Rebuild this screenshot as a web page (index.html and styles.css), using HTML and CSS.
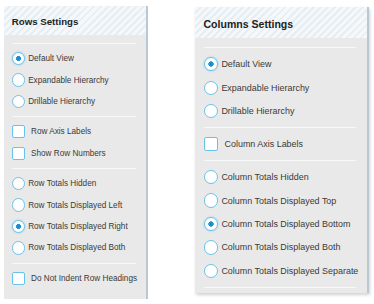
FILE: index.html
```html
<!DOCTYPE html>
<html lang="en">
<head>
    <meta charset="UTF-8">
    <title>Pivot Settings</title>
    <link rel="stylesheet" href="styles.css">
</head>
<body>
    <div class="panels">
        <!-- Rows -->
        <section class="panel panel-rows">
            <header class="panel-head"><h2>Rows Settings</h2></header>
            <div class="panel-body">
                <div class="group">
                    <label class="opt"><input type="radio" name="row-view" checked>Default View</label>
                    <label class="opt"><input type="radio" name="row-view">Expandable Hierarchy</label>
                    <label class="opt"><input type="radio" name="row-view">Drillable Hierarchy</label>
                </div>
                <div class="group">
                    <label class="opt"><input type="checkbox">Row Axis Labels</label>
                    <label class="opt"><input type="checkbox">Show Row Numbers</label>
                </div>
                <div class="group">
                    <label class="opt"><input type="radio" name="row-totals">Row Totals Hidden</label>
                    <label class="opt"><input type="radio" name="row-totals">Row Totals Displayed Left</label>
                    <label class="opt"><input type="radio" name="row-totals" checked>Row Totals Displayed Right</label>
                    <label class="opt"><input type="radio" name="row-totals">Row Totals Displayed Both</label>
                </div>
                <div class="group">
                    <label class="opt"><input type="checkbox">Do Not Indent Row Headings</label>
                </div>
            </div>
        </section>

        <!-- Columns -->
        <section class="panel panel-cols">
            <header class="panel-head"><h2>Columns Settings</h2></header>
            <div class="panel-body">
                <div class="group">
                    <label class="opt"><input type="radio" name="col-view" checked>Default View</label>
                    <label class="opt"><input type="radio" name="col-view">Expandable Hierarchy</label>
                    <label class="opt"><input type="radio" name="col-view">Drillable Hierarchy</label>
                </div>
                <div class="group">
                    <label class="opt"><input type="checkbox">Column Axis Labels</label>
                </div>
                <div class="group last">
                    <label class="opt"><input type="radio" name="col-totals">Column Totals Hidden</label>
                    <label class="opt"><input type="radio" name="col-totals">Column Totals Displayed Top</label>
                    <label class="opt"><input type="radio" name="col-totals" checked>Column Totals Displayed Bottom</label>
                    <label class="opt"><input type="radio" name="col-totals">Column Totals Displayed Both</label>
                    <label class="opt"><input type="radio" name="col-totals">Column Totals Displayed Separate</label>
                </div>
            </div>
        </section>
    </div>
</body>
</html>
```

FILE: styles.css
```css
body {
    margin: 0;
    background: #fff;
    font-family: 'Liberation Sans', Arial, sans-serif;
    color: #3a3a3a;
    height: 304px;
    overflow: hidden;
}
.panels {
    display: flex;
    align-items: flex-start;
    gap: 47px;
    padding: 6px 0 0 4px;
}
.panel {
    background: #e9e9e9;
    border-right: 2px solid #b9c8d3;
    box-sizing: border-box;
}
.panel-rows {
    font-size: 8.2px;
    width: 144px;
    height: 293px;
    overflow: hidden;
}
.panel-cols {
    font-size: 8.95px;
    width: 174px;
    margin-top: 1px;
    box-shadow: 1px 2px 3px rgba(0, 0, 0, 0.18);
}
.panel-head {
    height: 3.5em;
    display: flex;
    align-items: center;
    padding: 0.3em 0 0 0.95em;
    box-sizing: border-box;
    background: repeating-linear-gradient(135deg, #f4f8fb 0 3px, #e6eef4 3px 5px);
}
.panel-head h2 {
    margin: 0;
    font-size: 1.18em;
    font-weight: bold;
    color: #222;
}
.panel-body {
    padding: 1em 1.2em 0.6em 0.95em;
}
.panel-rows .panel-body {
    border-left: 1px dashed #d4d4d4;
    margin-left: -1px;
    height: 100%;
}
.group {
    border-top: 1px solid #f8f8f8;
    padding: 0.48em 0;
}
.group.last {
    border-bottom: 1px solid #f8f8f8;
}
.opt {
    display: flex;
    align-items: center;
    height: 2.62em;
    white-space: nowrap;
}
.opt input {
    appearance: none;
    font-size: inherit;
    margin: 0 0.4em 0 0;
    width: 1.6em;
    height: 1.6em;
    background: #fff;
    border: 1.6px solid #68c3ea;
    box-sizing: border-box;
    flex-shrink: 0;
}
.opt input[type="radio"] {
    border-radius: 50%;
}
.opt input[type="radio"]:checked {
    background: radial-gradient(circle, #1a8fd6 0 0.27em, #fff 0.33em);
    box-shadow: 0 0 2px rgba(60, 170, 230, 0.6);
}
.opt input[type="checkbox"] {
    border-radius: 2px;
    margin-right: 0.75em;
}
```
